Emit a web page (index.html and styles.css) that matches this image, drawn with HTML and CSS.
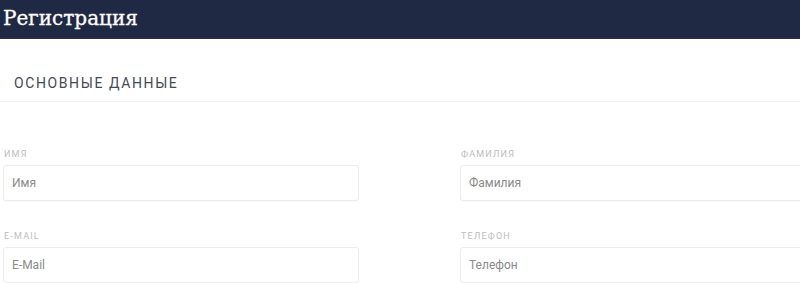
FILE: index.html
```html
<!DOCTYPE html>
<html lang="ru">
<head>
<meta charset="utf-8">
<link rel="stylesheet" href="styles.css">
</head>
<body>
<header class="topbar"><h1 class="title">Регистрация</h1></header>
<section class="section">
  <h2 class="section-title">ОСНОВНЫЕ ДАННЫЕ</h2>
</section>
<form class="form">
  <div class="field">
    <label class="label">ИМЯ</label>
    <input class="input" type="text" placeholder="Имя">
  </div>
  <div class="field">
    <label class="label">ФАМИЛИЯ</label>
    <input class="input" type="text" placeholder="Фамилия">
  </div>
  <div class="field">
    <label class="label">E-MAIL</label>
    <input class="input" type="text" placeholder="E-Mail">
  </div>
  <div class="field">
    <label class="label">ТЕЛЕФОН</label>
    <input class="input" type="text" placeholder="Телефон">
  </div>
</form>
</body>
</html>
```
FILE: styles.css
```css
html, body {
  margin: 0;
  padding: 0;
  background: #fff;
  overflow: hidden;
}
body {
  width: 800px;
  height: 283px;
  font-family: Roboto, "Noto Sans", sans-serif;
}
.topbar {
  height: 39px;
  background: #1f2944;
  border-bottom: 2px solid #2a2a48;
  box-sizing: border-box;
  display: flex;
  align-items: center;
  padding-left: 3px;
  padding-bottom: 1px;
}
.title {
  margin: 0;
  color: #fff;
  font-family: "DejaVu Serif", "Liberation Serif", serif;
  font-weight: 500;
  font-size: 20px;
  line-height: 1;
  -webkit-text-stroke: 0.3px #fff;
}
.section {
  height: 63px;
  border-bottom: 1px solid #f3f3f3;
  display: flex;
  align-items: flex-end;
  padding: 0 0 10px 14px;
  box-sizing: border-box;
}
.section-title {
  margin: 0;
  font-size: 14px;
  line-height: 16px;
  font-weight: normal;
  letter-spacing: 1.6px;
  color: #454a54;
}
.form {
  display: grid;
  grid-template-columns: 356px 356px;
  column-gap: 101px;
  row-gap: 30px;
  padding: 47px 0 0 3px;
}
.field {
  display: flex;
  flex-direction: column;
}
.label {
  font-size: 9px;
  letter-spacing: 1.2px;
  color: #bdbdbd;
  padding-left: 1px;
  line-height: 11px;
  margin-bottom: 5px;
}
.input {
  height: 36px;
  box-sizing: border-box;
  border: 1px solid #ececec;
  border-radius: 3px;
  box-shadow: 0 1px 1px rgba(0,0,0,0.03);
  padding: 0 8px;
  font-family: Roboto, "Noto Sans", sans-serif;
  font-size: 12px;
  color: #555;
  outline: none;
  margin: 0;
}
.input::placeholder {
  color: #8a8a8a;
}
```
